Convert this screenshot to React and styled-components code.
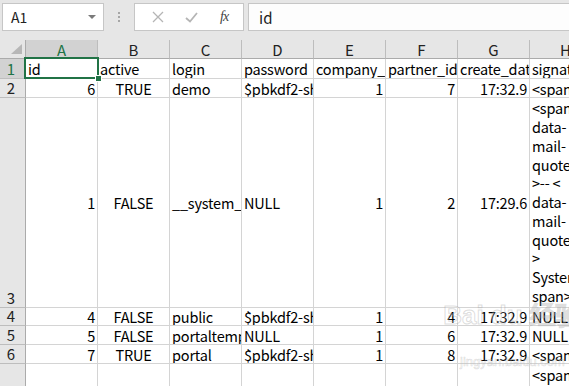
import React from "react";
import styled, { createGlobalStyle } from "styled-components";

const GlobalStyle = createGlobalStyle`
  html, body { margin: 0; padding: 0; background: #ffffff; overflow: hidden; }
  body { font-family: "Noto Sans CJK SC", "Noto Sans", sans-serif; }
  * { box-sizing: border-box; }
`;

const Page = styled.div`
  width: 569px;
  height: 386px;
  overflow: hidden;
  position: relative;
  background: #fff;
`;

const Toolbar = styled.div`
  height: 40px;
  background: #e6e6e6;
  display: flex;
  align-items: flex-start;
  padding: 3px 0 0 2px;
`;

const Box = styled.div`
  height: 28px;
  background: #ffffff;
  border: 1px solid #c6c6c6;
  display: flex;
  align-items: center;
`;

const NameBox = styled(Box)`
  width: 102px;
  justify-content: space-between;
  padding: 0 7px 0 8px;
  font-size: 14px;
  color: #222;
`;

const DropArrow = styled.span`
  width: 0;
  height: 0;
  border-left: 4px solid transparent;
  border-right: 4px solid transparent;
  border-top: 4px solid #7a7a7a;
`;

const Grip = styled.div`
  width: 30px;
  height: 28px;
  display: flex;
  flex-direction: column;
  align-items: center;
  justify-content: center;
  gap: 2px;
`;

const GripDot = styled.span`
  width: 2px;
  height: 2px;
  background: #a6a6a6;
`;

const FxBox = styled(Box)`
  width: 110px;
  justify-content: space-around;
  padding: 0 4px 0 6px;
`;

const FxLabel = styled.span`
  font-family: "Liberation Serif", serif;
  font-style: italic;
  font-size: 14px;
  color: #444;
  letter-spacing: -1px;
`;

const FormulaInput = styled(Box)`
  flex: 1;
  margin-left: 4px;
  border-right: none;
  padding-left: 10px;
  font-size: 15px;
  color: #222;
  background: #fdfdfd;
`;

const Sheet = styled.div`
  position: relative;
`;

const Row = styled.div`
  display: flex;
  height: ${(p) => p.$h}px;
`;

const Corner = styled.div`
  width: 26px;
  flex: none;
  background: #e6e6e6;
  border-right: 1px solid #ababab;
  border-bottom: 1px solid #ababab;
  position: relative;
`;

const CornerTri = styled.svg`
  position: absolute;
  right: 3px;
  bottom: 4px;
`;

const ColHeader = styled.div`
  width: 72px;
  flex: none;
  background: ${(p) => (p.$active ? "#d2d2d2" : "#e6e6e6")};
  color: ${(p) => (p.$active ? "#217346" : "#222")};
  border-right: 1px solid #bdbdbd;
  border-bottom: ${(p) => (p.$active ? "2px solid #217346" : "1px solid #ababab")};
  display: flex;
  align-items: center;
  justify-content: center;
  font-size: 15px;
  padding-top: ${(p) => (p.$active ? "1px" : "0")};
`;

const RowHeader = styled.div`
  width: 26px;
  flex: none;
  background: ${(p) => (p.$active ? "#d2d2d2" : "#e6e6e6")};
  color: ${(p) => (p.$active ? "#217346" : "#222")};
  border-right: 1px solid #ababab;
  border-bottom: 1px solid #bdbdbd;
  display: flex;
  align-items: flex-end;
  justify-content: center;
  padding: 0 3px 0 0;
  font-size: 15px;
  line-height: 18px;
`;

const Cell = styled.div`
  width: 72px;
  flex: none;
  border-right: 1px solid #d4d4d4;
  border-bottom: 1px solid #d4d4d4;
  display: flex;
  align-items: center;
  justify-content: ${(p) =>
    p.$align === "right" ? "flex-end" : p.$align === "center" ? "center" : "flex-start"};
  padding: 0 2px 0 2px;
  font-size: 14.5px;
  letter-spacing: -0.2px;
  color: #000;
  white-space: nowrap;
  overflow: hidden;
`;

const WrapCell = styled(Cell)`
  flex-direction: column;
  align-items: flex-start;
  justify-content: ${(p) => (p.$top ? "flex-start" : "center")};
  padding-top: ${(p) => (p.$top ? "2px" : "0")};
  line-height: 18.8px;
`;

const Line = styled.span`
  display: block;
`;

const Selection = styled.div`
  position: absolute;
  left: 24px;
  top: 17px;
  width: 75px;
  height: 22px;
  border: 2px solid #217346;
  pointer-events: none;
`;

const Handle = styled.div`
  position: absolute;
  right: -5px;
  bottom: -5px;
  width: 7px;
  height: 7px;
  background: #217346;
  border: 1px solid #fff;
`;

const Watermark = styled.div`
  position: absolute;
  left: 450px;
  top: 298px;
  width: 125px;
  display: flex;
  flex-direction: column;
  align-items: center;
  white-space: nowrap;
  pointer-events: none;
  color: rgba(255, 255, 255, 0.2);
  -webkit-text-stroke: 1px rgba(140, 140, 140, 0.3);
`;

const WmTitle = styled.div`
  font-family: "Liberation Sans", sans-serif;
  font-weight: bold;
  font-size: 26px;
  line-height: 34px;
`;

const WmSub = styled.div`
  font-family: "Liberation Sans", sans-serif;
  font-size: 13px;
  line-height: 16px;
  margin-top: 22px;
  -webkit-text-stroke: 0.6px rgba(140, 140, 140, 0.3);
`;

const cols = ["A", "B", "C", "D", "E", "F", "G", "H"];
const aligns = ["right", "center", "left", "left", "right", "right", "right", "left"];

const rows = [
  { n: 1, h: 20, cells: ["id", "active", "login", "password", "company_id", "partner_id", "create_date", "signature"], header: true },
  { n: 2, h: 19, cells: ["6", "TRUE", "demo", "$pbkdf2-sha512", "1", "7", "17:32.9", "<span"] },
  {
    n: 3,
    h: 210,
    cells: ["1", "FALSE", "__system__", "NULL", "1", "2", "17:29.6"],
    wrap: ["<span", "data-", "mail-", "quote", ">-- <", "data-", "mail-", "quote", ">", "System", "span>"],
  },
  { n: 4, h: 18, cells: ["4", "FALSE", "public", "$pbkdf2-sha512", "1", "4", "17:32.9", "NULL"] },
  { n: 5, h: 19, cells: ["5", "FALSE", "portaltemplate", "NULL", "1", "6", "17:32.9", "NULL"] },
  { n: 6, h: 19, cells: ["7", "TRUE", "portal", "$pbkdf2-sha512", "1", "8", "17:32.9", "<span"] },
  { n: 7, h: 60, cells: ["", "", "", "", "", "", ""], wrap: ["<span", "data-", "mail-"], top: true },
];

const Cross = () => (
  <svg width="12" height="12" viewBox="0 0 12 12">
    <path d="M1 1 L11 11 M11 1 L1 11" stroke="#b5b5b5" strokeWidth="1.3" fill="none" />
  </svg>
);

const Check = () => (
  <svg width="13" height="11" viewBox="0 0 13 11">
    <path d="M1 6 L5 9.5 L12 1" stroke="#b5b5b5" strokeWidth="1.8" fill="none" />
  </svg>
);

export default function App() {
  return (
    <Page>
      <GlobalStyle />
      <Toolbar>
        <NameBox>
          <span>A1</span>
          <DropArrow />
        </NameBox>
        <Grip>
          <GripDot />
          <GripDot />
          <GripDot />
        </Grip>
        <FxBox>
          <Cross />
          <Check />
          <FxLabel>fx</FxLabel>
        </FxBox>
        <FormulaInput>id</FormulaInput>
      </Toolbar>
      <Sheet>
        <Row $h={19}>
          <Corner>
            <CornerTri width="11" height="10" viewBox="0 0 11 10">
              <path d="M0 10 L11 0 L11 10 Z" fill="#b7b7b7" />
            </CornerTri>
          </Corner>
          {cols.map((c, i) => (
            <ColHeader key={c} $active={i === 0}>
              {c}
            </ColHeader>
          ))}
        </Row>
        {rows.map((r) => (
          <Row key={r.n} $h={r.h}>
            <RowHeader $active={r.n === 1}>{r.n}</RowHeader>
            {r.cells.map((v, i) => (
              <Cell key={i} $align={r.header ? "left" : aligns[i]}>
                {v}
              </Cell>
            ))}
            {r.wrap && (
              <WrapCell $top={r.top}>
                {r.wrap.map((l, i) => (
                  <Line key={i}>{l}</Line>
                ))}
              </WrapCell>
            )}
          </Row>
        ))}
        <Selection>
          <Handle />
        </Selection>
      </Sheet>
      <Watermark>
        <WmTitle>Bai du 经验</WmTitle>
        <WmSub>jingyan.baidu.com</WmSub>
      </Watermark>
    </Page>
  );
}
